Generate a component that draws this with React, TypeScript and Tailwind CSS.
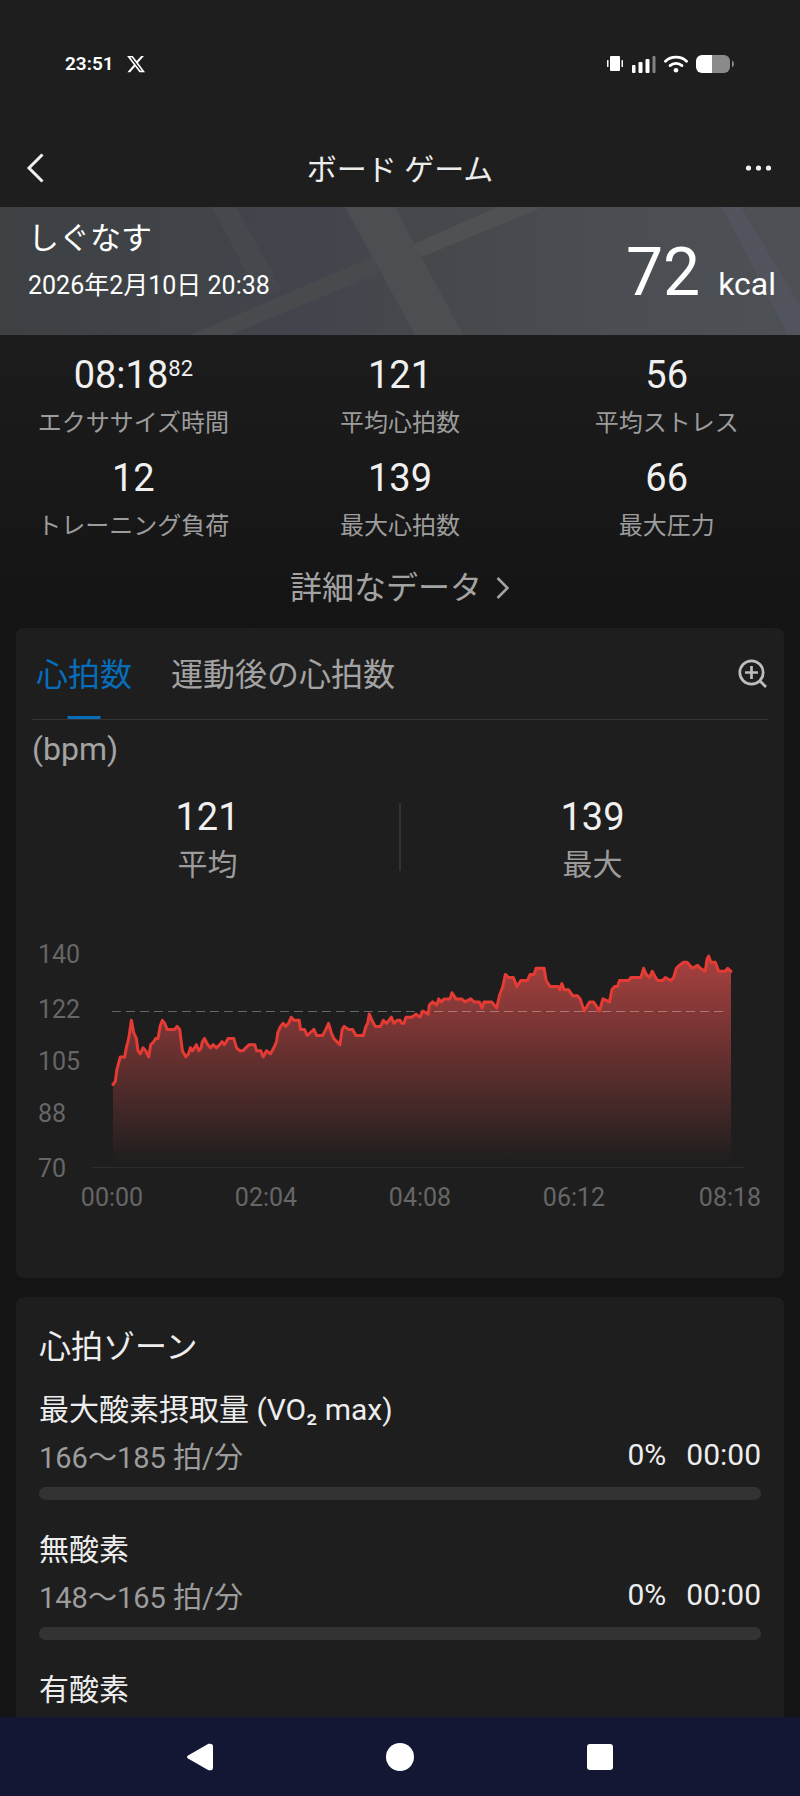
import * as React from 'react'
import { FaXTwitter } from 'react-icons/fa6'

type Sample = [number, number]

// [sample offset, bpm]
const HEART_RATE: Sample[] = [
  [340, 97], [347, 98], [352, 102], [362, 106], [375, 106], [380, 109], [387, 112], [395, 118],
  [402, 114], [410, 112], [415, 108], [422, 107], [430, 109], [438, 108], [447, 106], [453, 110],
  [462, 111], [468, 112], [475, 112], [481, 116], [488, 118], [495, 117], [502, 115], [525, 115],
  [532, 116], [540, 115], [548, 108], [558, 106], [566, 107], [572, 109], [578, 108], [584, 109],
  [590, 110], [597, 108], [604, 109], [608, 111], [614, 112], [624, 110], [632, 109], [640, 110],
  [650, 109], [660, 110], [667, 111], [674, 110], [685, 112], [702, 112], [710, 109], [720, 108],
  [730, 108], [738, 109], [748, 110], [765, 110], [770, 108], [783, 108], [790, 106], [800, 108],
  [812, 107], [822, 109], [830, 111], [834, 114], [842, 116], [850, 117], [858, 116], [866, 117],
  [874, 119], [882, 118], [898, 118], [902, 115], [914, 115], [922, 113], [932, 114], [942, 115],
  [950, 113], [968, 113], [978, 115], [986, 117], [994, 114], [1002, 112], [1020, 110], [1027, 115],
  [1033, 116], [1045, 115], [1058, 115], [1068, 113], [1090, 113], [1098, 116], [1103, 117], [1108, 120],
  [1116, 118], [1126, 116], [1142, 116], [1150, 118], [1160, 117], [1174, 119], [1182, 117], [1192, 118],
  [1200, 118], [1205, 117], [1212, 117], [1218, 119], [1235, 119], [1248, 120], [1260, 119], [1268, 121],
  [1285, 120], [1288, 123], [1298, 124], [1310, 123], [1316, 125], [1324, 124], [1332, 125], [1350, 125],
  [1356, 127], [1362, 126], [1368, 125], [1385, 125], [1395, 124], [1412, 125], [1422, 124], [1438, 124],
  [1446, 122], [1452, 124], [1475, 124], [1490, 122], [1498, 126], [1508, 129], [1516, 133], [1525, 132],
  [1540, 132], [1550, 129], [1562, 131], [1582, 131], [1590, 133], [1602, 133], [1608, 135], [1632, 135],
  [1638, 131], [1650, 129], [1675, 129], [1680, 128], [1685, 130], [1692, 128], [1705, 128], [1718, 126],
  [1732, 126], [1740, 125], [1752, 121], [1768, 124], [1780, 124], [1798, 121], [1808, 125], [1828, 124],
  [1835, 128], [1843, 129], [1852, 129], [1858, 131], [1885, 131], [1892, 132], [1922, 132], [1930, 135],
  [1938, 133], [1948, 132], [1956, 134], [1966, 132], [1972, 131], [1988, 131], [1995, 132], [2012, 131],
  [2020, 132], [2028, 135], [2038, 136], [2050, 137], [2060, 137], [2076, 135], [2092, 136], [2100, 135],
  [2115, 134], [2120, 138], [2125, 139], [2132, 137], [2145, 137], [2155, 134], [2175, 134], [2182, 135],
  [2192, 134],
]

const PLOT = { left: 97, right: 715, bottom: 237, top: 23 }

const Y_TICKS = [
  { label: '140', y: 33 },
  { label: '122', y: 88 },
  { label: '105', y: 140 },
  { label: '88', y: 192 },
  { label: '70', y: 247 },
]

const X_TICKS = [
  { label: '00:00', x: 96 },
  { label: '02:04', x: 250 },
  { label: '04:08', x: 404 },
  { label: '06:12', x: 558 },
  { label: '08:18', x: 714 },
]

const STATS = [
  { value: '08:18', sup: '82', label: 'エクササイズ時間' },
  { value: '121', label: '平均心拍数' },
  { value: '56', label: '平均ストレス' },
  { value: '12', label: 'トレーニング負荷' },
  { value: '139', label: '最大心拍数' },
  { value: '66', label: '最大圧力' },
]

const ZONES = [
  { name: '最大酸素摂取量 (VO₂ max)', range: '166〜185 拍/分', percent: 0, time: '00:00' },
  { name: '無酸素', range: '148〜165 拍/分', percent: 0, time: '00:00' },
]

function toPoint([t, bpm]: Sample) {
  const first = HEART_RATE[0][0]
  const last = HEART_RATE[HEART_RATE.length - 1][0]
  const x = PLOT.left + ((t - first) / (last - first)) * (PLOT.right - PLOT.left)
  const y = PLOT.bottom - ((bpm - 70) / 70) * (PLOT.bottom - PLOT.top)
  return `${x.toFixed(1)},${y.toFixed(1)}`
}

function StatusBar() {
  return (
    <div className="flex h-32 items-center justify-between px-[65px]">
      <div className="flex items-center gap-3 text-[19px] font-semibold text-white">
        <span>23:51</span>
        <FaXTwitter size={20} />
      </div>
      <div className="flex items-center gap-2 text-white">
        <svg width="18" height="18" viewBox="0 0 18 18" fill="currentColor" aria-hidden="true">
          <rect x="4" y="1" width="10" height="15" rx="1" />
          <rect x="1" y="5" width="1.5" height="7" rx="0.5" />
          <rect x="15.5" y="5" width="1.5" height="7" rx="0.5" />
        </svg>
        <svg width="24" height="18" viewBox="0 0 24 18" fill="currentColor" aria-hidden="true">
          <rect x="0" y="10" width="3.5" height="8" rx="1" />
          <rect x="6.5" y="7" width="4" height="11" rx="1" />
          <rect x="13.5" y="4" width="4" height="14" rx="1" />
          <rect x="20.5" y="1" width="3" height="17" rx="1" opacity="0.45" />
        </svg>
        <svg width="24" height="18" viewBox="0 0 24 18" fill="none" stroke="currentColor" aria-hidden="true">
          <path d="M1.5 6.2C7 .8 17 .8 22.5 6.2" strokeWidth="2.8" strokeLinecap="round" />
          <path d="M6 10.6c3.4-3 8.6-3 12 0" strokeWidth="2.8" strokeLinecap="round" />
          <circle cx="12" cy="15.3" r="2.3" fill="currentColor" stroke="none" />
        </svg>
        <svg width="39" height="18" viewBox="0 0 39 18" aria-hidden="true">
          <path d="M6 0h10.5v18H6a6 6 0 0 1-6-6V6a6 6 0 0 1 6-6z" fill="#fff" />
          <path d="M16.5 0H28a6 6 0 0 1 6 6v6a6 6 0 0 1-6 6H16.5z" fill="#8a8a8a" />
          <path d="M36 5.5q2 .5 2 3.5t-2 3.5z" fill="#8a8a8a" />
        </svg>
      </div>
    </div>
  )
}

function TitleBar() {
  return (
    <header className="flex h-[79px] items-center justify-between px-6">
      <button type="button" aria-label="戻る" className="flex size-10 items-center">
        <svg width="24" height="32" viewBox="0 0 24 32" fill="none" stroke="#f0f0f0" strokeWidth="3">
          <path d="M18.5 2.5 5 16l13.5 13.5" />
        </svg>
      </button>
      <h1 className="pt-1 text-[30px] leading-10 text-[#ededed]">ボード ゲーム</h1>
      <button type="button" aria-label="メニュー" className="flex size-10 items-center justify-end">
        <svg width="32" height="8" viewBox="0 0 32 8" fill="#f0f0f0">
          <circle cx="4.5" cy="4" r="2.6" />
          <circle cx="14.5" cy="4" r="2.6" />
          <circle cx="24.5" cy="4" r="2.6" />
        </svg>
      </button>
    </header>
  )
}

function MapBackground() {
  return (
    <svg
      className="absolute inset-0 h-full w-full"
      viewBox="0 0 800 128"
      preserveAspectRatio="none"
      aria-hidden="true"
    >
      <defs>
        <linearGradient id="map-base" x1="0" x2="1" y1="0" y2="0">
          <stop offset="0" stopColor="#3d4144" />
          <stop offset="0.22" stopColor="#404347" />
          <stop offset="0.4" stopColor="#42454d" />
          <stop offset="0.52" stopColor="#45484b" />
          <stop offset="0.75" stopColor="#4a4d51" />
          <stop offset="1" stopColor="#4d5156" />
        </linearGradient>
      </defs>
      <rect width="800" height="128" fill="url(#map-base)" />
      <path d="M212 0h24l46 82-22 9z" fill="#45494d" />
      <path d="M190 128 372 50l8 16-150 62z" fill="#474b4e" />
      <path d="M345 0h50l68 128h-48z" fill="#4b4f52" />
      <path d="M497 0h46L422 50l-10-12z" fill="#4f5153" />
      <path d="M722 0h19l59 98v30h-12z" fill="#51545d" />
    </svg>
  )
}

function Summary() {
  return (
    <section className="relative">
      <MapBackground />
      <div className="relative flex items-end justify-between pt-2 pr-6 pb-[26px] pl-7 text-white">
        <div>
          <p className="text-[31px] leading-[48px]">しぐなす</p>
          <p className="text-[25px] leading-[46px]">2026年2月10日 20:38</p>
        </div>
        <p className="flex items-baseline gap-[18px]">
          <span className="text-[66px] leading-[72px]">72</span>
          <span className="text-[32px] leading-10">kcal</span>
        </p>
      </div>
    </section>
  )
}

function Stats() {
  return (
    <section className="bg-linear-to-b from-[#1c1c1c] to-[#141414] pt-4">
      <dl className="grid grid-cols-3 gap-y-[13px] text-center">
        {STATS.map((stat) => (
          <div key={stat.label} className="flex flex-col-reverse gap-1.5">
            <dt className="text-[24px] leading-9 text-[#9c9c9c]">{stat.label}</dt>
            <dd className="flex justify-center text-[38px] leading-[48px] text-[#f0f0f0]">
              {stat.value}
              {stat.sup && <span className="text-[22px] leading-9">{stat.sup}</span>}
            </dd>
          </div>
        ))}
      </dl>
      <div className="flex justify-center pt-5 pb-4">
        <button type="button" className="flex items-center gap-3.5 text-[32px] leading-[48px] text-[#a3a3a3]">
          詳細なデータ
          <svg width="14" height="24" viewBox="0 0 14 24" fill="none" stroke="currentColor" strokeWidth="2.5">
            <path d="M1.5 2 11.5 12l-10 10" />
          </svg>
        </button>
      </div>
    </section>
  )
}

function HeartRateChart() {
  const line = HEART_RATE.map(toPoint).join(' ')
  const area = `${PLOT.left},${PLOT.bottom} ${line} ${PLOT.right},${PLOT.bottom}`
  return (
    <svg className="w-full" viewBox="0 0 768 290" role="img" aria-label="心拍数グラフ">
      <defs>
        <linearGradient id="hr-fill" gradientUnits="userSpaceOnUse" x1="0" x2="0" y1="27" y2="234">
          <stop offset="0" stopColor="#ef5350" stopOpacity="0.66" />
          <stop offset="0.45" stopColor="#ef5350" stopOpacity="0.36" />
          <stop offset="1" stopColor="#ef5350" stopOpacity="0" />
        </linearGradient>
      </defs>
      <polygon points={area} fill="url(#hr-fill)" />
      <line x1="96" x2="712" y1="81.5" y2="81.5" stroke="#fff" strokeOpacity="0.32" strokeDasharray="9 5" />
      <line x1="76" x2="728" y1="237.5" y2="237.5" stroke="#2e2e2e" />
      <polyline points={line} fill="none" stroke="#e53b35" strokeWidth="3" strokeLinejoin="round" strokeLinecap="round" />
      <g fill="#666" fontSize="25">
        {Y_TICKS.map((tick) => (
          <text key={tick.label} x="22" y={tick.y}>
            {tick.label}
          </text>
        ))}
        {X_TICKS.map((tick) => (
          <text key={tick.label} x={tick.x} y="276" textAnchor="middle">
            {tick.label}
          </text>
        ))}
      </g>
    </svg>
  )
}

function HeartRateCard() {
  return (
    <section className="mx-4 rounded-lg bg-[#1e1e1e] pb-[58px]">
      <div className="mx-4 flex h-[92px] items-center justify-between border-b border-[#333]">
        <div role="tablist" className="flex h-full gap-[39px] pl-1 text-[32px]">
          <button type="button" role="tab" aria-selected="true" className="relative pt-0.5 text-[#076dbb]">
            心拍数
            <span className="absolute bottom-0 left-1/2 h-[3px] w-[33px] -translate-x-1/2 bg-[#076dbb]" />
          </button>
          <button type="button" role="tab" aria-selected="false" className="pt-0.5 text-[#a3a3a3]">
            運動後の心拍数
          </button>
        </div>
        <button type="button" aria-label="拡大">
          <svg width="30" height="30" viewBox="0 0 30 30" fill="none" stroke="#bdbdbd" strokeWidth="2.7">
            <circle cx="13.5" cy="13.5" r="11.7" />
            <path d="M13.5 7v13M7 13.5h13M21.500 21.500l6.500 6.500" />
          </svg>
        </button>
      </div>
      <p className="mt-[9px] pl-4 text-[32px] leading-10 text-[#a3a3a3]">(bpm)</p>
      <dl className="mt-6 mb-[45px] flex items-center text-center">
        <div className="flex flex-1 flex-col-reverse gap-1">
          <dt className="text-[30px] leading-10 text-[#9c9c9c]">平均</dt>
          <dd className="text-[38px] leading-[48px] text-[#f0f0f0]">121</dd>
        </div>
        <div className="mb-1 h-[68px] w-0.5 bg-[#333]" />
        <div className="flex flex-1 flex-col-reverse gap-1">
          <dt className="text-[30px] leading-10 text-[#9c9c9c]">最大</dt>
          <dd className="text-[38px] leading-[48px] text-[#f0f0f0]">139</dd>
        </div>
      </dl>
      <HeartRateChart />
    </section>
  )
}

function ZonesCard() {
  return (
    <section className="mx-4 mt-[19px] rounded-t-lg bg-[#1e1e1e] px-[23px] pt-[26px] pb-[7px] text-[#ededed]">
      <h2 className="mb-[19px] text-[32px] leading-[48px]">心拍ゾーン</h2>
      {ZONES.map((zone) => (
        <div key={zone.name} className="mb-[30px]">
          <h3 className="text-[30px] leading-10">{zone.name}</h3>
          <div className="mt-2 mb-[9px] flex items-start justify-between">
            <p className="text-[29px] leading-10 text-[#9c9c9c]">{zone.range}</p>
            <p className="flex gap-5 text-[30px] leading-[34px]">
              <span>{zone.percent}%</span>
              <span>{zone.time}</span>
            </p>
          </div>
          <div className="h-[13px] overflow-hidden rounded-full bg-[#333]">
            <div className="h-full bg-[#e53b35]" style={{ width: `${zone.percent}%` }} />
          </div>
        </div>
      ))}
      <h3 className="text-[30px] leading-10">有酸素</h3>
    </section>
  )
}

function NavBar() {
  return (
    <nav className="grid h-[79px] grid-cols-3 place-items-center bg-[#131733] px-[12.5%]">
      <button type="button" aria-label="戻る">
        <svg width="28" height="28" viewBox="0 0 28 28" fill="#fff">
          <path d="M2 12.5 22.5.8Q27 0 27 3.5v21q0 3.500-4.500 2.700L2 15.500q-2-1.500 0-3z" />
        </svg>
      </button>
      <button type="button" aria-label="ホーム" className="size-7 rounded-full bg-white" />
      <button type="button" aria-label="履歴" className="size-[26px] rounded-[3px] bg-white" />
    </nav>
  )
}

export default function App() {
  return (
    <div lang="ja" className="bg-[#141414] font-['Roboto','Noto_Sans_CJK_JP',sans-serif]">
      <div className="bg-[#1e1e1e]">
        <StatusBar />
        <TitleBar />
      </div>
      <main>
        <Summary />
        <Stats />
        <HeartRateCard />
        <ZonesCard />
      </main>
      <NavBar />
    </div>
  )
}
